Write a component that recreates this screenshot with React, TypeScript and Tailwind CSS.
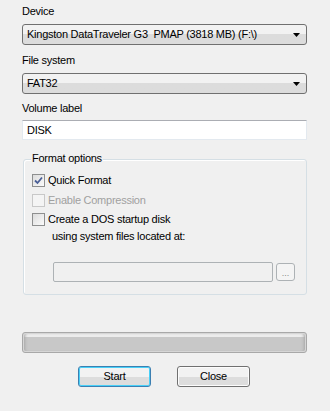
import React from "react";

const font = { fontFamily: "'Liberation Sans', Arial, sans-serif" };

const ComboBox = ({ value }: { value: string }) => {
    return <div className="flex items-center justify-between w-[285px] h-[21px] pl-[4px] pr-[6px] border border-[#707070] rounded-[3px] bg-gradient-to-b from-[#f2f2f2] from-50% to-[#dcdcdc] to-50% text-[11px] text-black whitespace-pre">
        <span>{value}</span>
        <svg width="7" height="4" viewBox="0 0 7 4">
            <path d="M0 0 H7 L3.5 4 Z" fill="#000" />
        </svg>
    </div>
}

const CheckBox = ({ label, checked, disabled }: { label: string; checked?: boolean; disabled?: boolean }) => {
    return <div className={`flex items-center h-[13px] gap-[3px] text-[11px] ${disabled ? "text-[#a0a0a0]" : "text-black"}`}>
        <div className={`w-[13px] h-[13px] border ${disabled ? "border-[#c8c8c8] bg-[#f4f4f4]" : "border-[#8e8f8f] bg-gradient-to-br from-[#dcdcdc] to-[#fbfbfb]"} flex items-center justify-center`}>
            {checked && <svg width="9" height="9" viewBox="0 0 9 9">
                <path d="M1 4.5 L3.5 7 L8 1.5" fill="none" stroke="#4a5f97" strokeWidth="1.8" />
            </svg>}
        </div>
        <span>{label}</span>
    </div>
}

const WinButton = ({ label, isDefault }: { label: string; isDefault?: boolean }) => {
    return <button className={`w-[73px] h-[21px] rounded-[3px] border text-[11px] text-black bg-gradient-to-b from-[#f2f2f2] from-50% to-[#dddddd] to-50% ${isDefault ? "border-[#3c7fb1] shadow-[inset_0_0_0_1px_#48d0f8]" : "border-[#707070] shadow-[inset_0_0_0_1px_#fcfcfc]"}`}>
        {label}
    </button>
}

export default function App() {
    return <div className="w-[330px] h-[411px] bg-[#f0f0f0] pl-[22px] pt-[5px] flex flex-col tracking-[-0.25px]" style={font}>
        <div className="h-[13px] leading-[13px] text-[11px] text-black">Device</div>
        <div className="mt-[6px]">
            <ComboBox value="Kingston DataTraveler G3  PMAP (3818 MB) (F:\)" />
        </div>
        <div className="mt-[9px] h-[13px] leading-[13px] text-[11px] text-black">File system</div>
        <div className="mt-[6px]">
            <ComboBox value="FAT32" />
        </div>
        <div className="mt-[8px] h-[13px] leading-[13px] text-[11px] text-black">Volume label</div>
        <div className="mt-[5px] w-[285px] h-[20px] bg-white border border-[#e3e9ef] border-t-[#abadb3] flex items-center px-[4px] text-[11px] text-black">
            DISK
        </div>

        <div className="relative mt-[19px] ml-[1px] w-[284px] h-[136px] border border-[#d5dfe5] rounded-[3px] shadow-[inset_1px_1px_0_#fff] pl-[8px] pt-[14px]">
            <span className="absolute left-[7px] top-[-8px] px-[1px] bg-[#f0f0f0] text-[11px] leading-[13px] text-black">Format options</span>
            <CheckBox label="Quick Format" checked />
            <div className="mt-[7px]">
                <CheckBox label="Enable Compression" disabled />
            </div>
            <div className="mt-[6px]">
                <CheckBox label="Create a DOS startup disk" />
            </div>
            <div className="ml-[20px] mt-[4px] h-[13px] leading-[13px] text-[11px] text-black">using system files located at:</div>
            <div className="mt-[19px] ml-[21px] flex items-start gap-[3px]">
                <div className="w-[220px] h-[20px] border border-[#adb2b5] rounded-[2px] bg-[#f0f0f0]"></div>
                <div className="mt-[1px] w-[19px] h-[18px] border border-[#adb2b5] rounded-[3px] bg-[#f4f4f4] flex items-end justify-center pb-[2px] text-[9px] leading-[9px] tracking-normal text-[#8a8a8a]">...</div>
            </div>
        </div>

        <div className="mt-[37px] w-[285px] h-[21px] border border-[#a8a8a8] rounded-[3px] bg-[#d6d6d6] p-[1px]">
            <div className="w-full h-full rounded-[2px] bg-gradient-to-b from-[#ececec] from-20% to-[#c8c8c8] to-20% shadow-[inset_3px_0_3px_-2px_#a8a8a8,inset_-3px_0_3px_-2px_#a8a8a8]"></div>
        </div>

        <div className="mt-[13px] ml-[56px] flex gap-[26px]">
            <WinButton label="Start" isDefault />
            <WinButton label="Close" />
        </div>
    </div>
}
